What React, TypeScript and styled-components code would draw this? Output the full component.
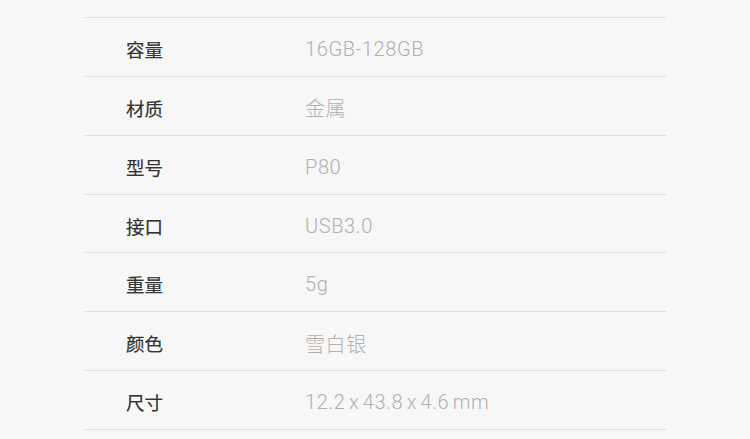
import React from "react";
import styled, { createGlobalStyle } from "styled-components";

const specs = [
  { label: "容量", value: "16GB-128GB" },
  { label: "材质", value: "金属" },
  { label: "型号", value: "P80" },
  { label: "接口", value: "USB3.0" },
  { label: "重量", value: "5g" },
  { label: "颜色", value: "雪白银" },
  { label: "尺寸", value: "12.2 x 43.8 x 4.6 mm" },
];

const App: React.FC = () => {
  return (
    <>
      <GlobalStyle />
      <Page>
        <SpecTable>
          {specs.map((item) => (
            <SpecRow key={item.label}>
              <Label>{item.label}</Label>
              <Value>{item.value}</Value>
            </SpecRow>
          ))}
        </SpecTable>
      </Page>
    </>
  );
};

export default App;

const GlobalStyle = createGlobalStyle`
  body {
    margin: 0;
    background: #f7f7f8;
    font-family: "Noto Sans CJK SC", "Noto Sans", sans-serif;
  }
`;

const Page = styled.div`
  width: 750px;
  height: 439px;
  overflow: hidden;
  padding-top: 17px;
  box-sizing: border-box;
`;

const SpecTable = styled.div`
  margin-left: 85px;
  width: 581px;
  border-top: 1px solid #dedede;
`;

const SpecRow = styled.div`
  display: flex;
  align-items: center;
  box-sizing: border-box;
  height: 58.86px;
  padding-top: 4px;
  border-bottom: 1px solid #dedede;
`;

const Label = styled.div`
  width: 179px;
  padding-left: 41px;
  font-size: 18.5px;
  color: #333;
  font-weight: 400;
  -webkit-text-stroke: 0.2px #333;
`;

const Value = styled.div`
  font-family: Roboto, "Noto Sans CJK SC", sans-serif;
  font-size: 20px;
  color: #b0b0b0;
  font-weight: 300;
  letter-spacing: 0.6px;
  word-spacing: -2px;
`;
